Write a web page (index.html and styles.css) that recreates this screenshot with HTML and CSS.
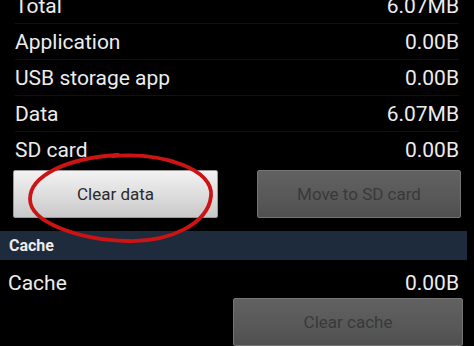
FILE: index.html
```html
<!DOCTYPE html>
<html>
<head>
<meta charset="utf-8">
<link rel="stylesheet" href="styles.css">
</head>
<body>
<div class="screen">
  <div class="list">
    <div class="row"><span>Total</span><span>6.07MB</span></div>
    <div class="row"><span>Application</span><span>0.00B</span></div>
    <div class="row"><span>USB storage app</span><span>0.00B</span></div>
    <div class="row"><span>Data</span><span>6.07MB</span></div>
    <div class="row last"><span>SD card</span><span>0.00B</span></div>
  </div>
  <div class="buttons">
    <div class="btn btn-light">Clear data</div>
    <div class="btn btn-dim">Move to SD card</div>
  </div>
  <div class="section">Cache</div>
  <div class="cache-row"><span>Cache</span><span>0.00B</span></div>
  <div class="btn btn-dim btn-cache">Clear cache</div>
  <svg class="mark" width="474" height="346" viewBox="0 0 474 346">
    <path d="M112 156 C 165 152, 214 170, 211 196 C 208 224, 170 242, 128 241 C 78 240, 30 222, 30 199 C 30 176, 66 158, 118 155" fill="none" stroke="#cc1414" stroke-width="3.8" stroke-linecap="round"/>
  </svg>
</div>
</body>
</html>
```
FILE: styles.css
```css
html, body {
  margin: 0;
  padding: 0;
  background: #000;
}
.screen {
  position: relative;
  width: 474px;
  height: 346px;
  overflow: hidden;
  background: #000;
  font-family: Roboto, "Noto Sans", sans-serif;
  color: #ececec;
}
.list {
  margin-top: -12px;
  padding: 0 15px 0 15px;
}
.row {
  display: flex;
  justify-content: space-between;
  height: 36px;
  line-height: 36px;
  font-size: 21px;
  box-sizing: border-box;
  border-bottom: 1px solid #111;
}
.row.last {
  border-bottom: none;
}
.buttons {
  display: flex;
  gap: 39px;
  padding-left: 13px;
  margin-top: 2px;
}
.btn {
  height: 48px;
  box-sizing: border-box;
  display: flex;
  align-items: center;
  justify-content: center;
  font-size: 17px;
  border-radius: 2px;
}
.btn-light {
  width: 205px;
  background: linear-gradient(#f2f2f2, #dadada 60%, #c8c8c8);
  border: 1px solid #9a9a9a;
  color: #2a2a2a;
}
.btn-dim {
  width: 204px;
  background: linear-gradient(#616161, #585858 60%, #4f4f4f);
  border: 1px solid #747474;
  color: #393939;
}
.section {
  margin-top: 13px;
  width: 467px;
  height: 29px;
  background: #1d2b3c;
  box-sizing: border-box;
  padding-left: 9px;
  line-height: 29px;
  font-size: 16px;
  font-weight: bold;
  color: #ececec;
}
.cache-row {
  display: flex;
  justify-content: space-between;
  padding: 9px 15px 0 8px;
  height: 37px;
  box-sizing: border-box;
  line-height: 28px;
  font-size: 21px;
}
.btn-cache {
  margin-top: 1px;
  margin-left: 233px;
  width: 230px;
}
.mark {
  position: absolute;
  left: 0;
  top: 0;
  pointer-events: none;
}
```
